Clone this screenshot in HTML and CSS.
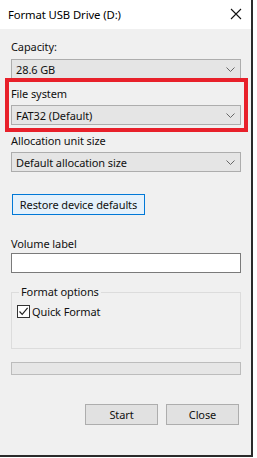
FILE: index.html
```html
<!DOCTYPE html>
<html>
<head>
<meta charset="utf-8">
<link rel="stylesheet" href="styles.css">
</head>
<body>
<div class="window">
  <div class="titlebar">
    <span class="title">Format USB Drive (D:)</span>
    <svg class="close" width="12" height="12" viewBox="0 0 12 12"><path d="M1 1 L11 11 M11 1 L1 11" stroke="#111" stroke-width="1.1" fill="none"/></svg>
  </div>
  <div class="content">
    <div class="label lbl-capacity">Capacity:</div>
    <div class="combo"><span>28.6 GB</span><svg class="chev" width="9" height="6" viewBox="0 0 9 6"><path d="M0.5 0.5 L4.5 4.5 L8.5 0.5" stroke="#666" stroke-width="1" fill="none"/></svg></div>
    <div class="highlight">
      <div class="label">File system</div>
      <div class="combo"><span>FAT32 (Default)</span><svg class="chev" width="9" height="6" viewBox="0 0 9 6"><path d="M0.5 0.5 L4.5 4.5 L8.5 0.5" stroke="#666" stroke-width="1" fill="none"/></svg></div>
    </div>
    <div class="label lbl-alloc">Allocation unit size</div>
    <div class="combo"><span>Default allocation size</span><svg class="chev" width="9" height="6" viewBox="0 0 9 6"><path d="M0.5 0.5 L4.5 4.5 L8.5 0.5" stroke="#666" stroke-width="1" fill="none"/></svg></div>
    <div class="btn btn-restore">Restore device defaults</div>
    <div class="label lbl-volume">Volume label</div>
    <div class="textbox"></div>
    <fieldset class="group">
      <legend>Format options</legend>
      <div class="check-row">
        <span class="checkbox"><svg width="11" height="11" viewBox="0 0 11 11"><path d="M1.5 5.5 L4.2 8.3 L9.6 1.8" stroke="#222" stroke-width="1.2" fill="none"/></svg></span>
        <span>Quick Format</span>
      </div>
    </fieldset>
    <div class="progress"></div>
    <div class="buttons">
      <div class="btn btn-std">Start</div>
      <div class="btn btn-std">Close</div>
    </div>
  </div>
</div>
</body>
</html>
```
FILE: styles.css
```css
* { box-sizing: border-box; }
html, body { margin: 0; padding: 0; background: #fff; }
body {
  font-family: "Noto Sans", "DejaVu Sans", sans-serif;
  font-size: 11px;
  letter-spacing: -0.1px;
  color: #111;
}
.window {
  width: 253px;
  height: 457px;
  border-right: 2px solid #2a2a2a;
  border-bottom: 2px solid #2a2a2a;
  background: #f0f0f0;
  display: flex;
  flex-direction: column;
}
.titlebar {
  height: 29px;
  background: #fff;
  display: flex;
  align-items: center;
  justify-content: space-between;
  padding: 0 9px 0 8px;
}
.title { font-size: 11.3px; color: #000; }
.close { margin-top: -1px; }
.content {
  padding: 0 10px 0 11px;
  display: flex;
  flex-direction: column;
}
.label { height: 16px; line-height: 16px; }
.lbl-capacity { margin-top: 10px; margin-bottom: 4px; }
.combo {
  height: 20px;
  background: #e5e5e5;
  border: 1px solid #adadad;
  display: flex;
  align-items: center;
  justify-content: space-between;
  padding: 0 5px 0 4px;
}
.chev { margin-top: 1px; }
.highlight {
  margin: -1px -7px 0 -6px;
  border: 4px solid #e8202a;
  padding: 4px 3px 3px 2px;
}
.highlight .label { margin-bottom: 3px; }
.lbl-alloc { margin-top: 1px; margin-bottom: 3px; }
.btn {
  height: 21px;
  display: flex;
  align-items: center;
  justify-content: center;
}
.btn-restore {
  margin-top: 22px;
  width: 133px;
  margin-left: 1px;
  background: #e5f1fb;
  border: 1px solid #0078d7;
}
.lbl-volume { margin-top: 21px; margin-bottom: 1px; }
.textbox {
  height: 20px;
  background: #fff;
  border: 1px solid #7a7a7a;
}
.group {
  margin: 11px 0 0 0;
  padding: 4px 5px 0 5px;
  height: 65px;
  border: 1px solid #dcdcdc;
}
.group legend {
  padding: 0 2px;
  margin-left: 2px;
  line-height: 16px;
}
.check-row {
  display: flex;
  align-items: center;
  gap: 2px;
}
.checkbox {
  width: 13px;
  height: 13px;
  border: 1px solid #333;
  background: #fff;
  display: flex;
  align-items: center;
  justify-content: center;
}
.progress {
  margin-top: 13px;
  height: 13px;
  background: #e6e6e6;
  border: 1px solid #bcbcbc;
}
.buttons {
  margin-top: 29px;
  display: flex;
  justify-content: flex-end;
  gap: 8px;
  padding-right: 2px;
}
.btn-std {
  width: 73px;
  background: #e1e1e1;
  border: 1px solid #adadad;
}
```
